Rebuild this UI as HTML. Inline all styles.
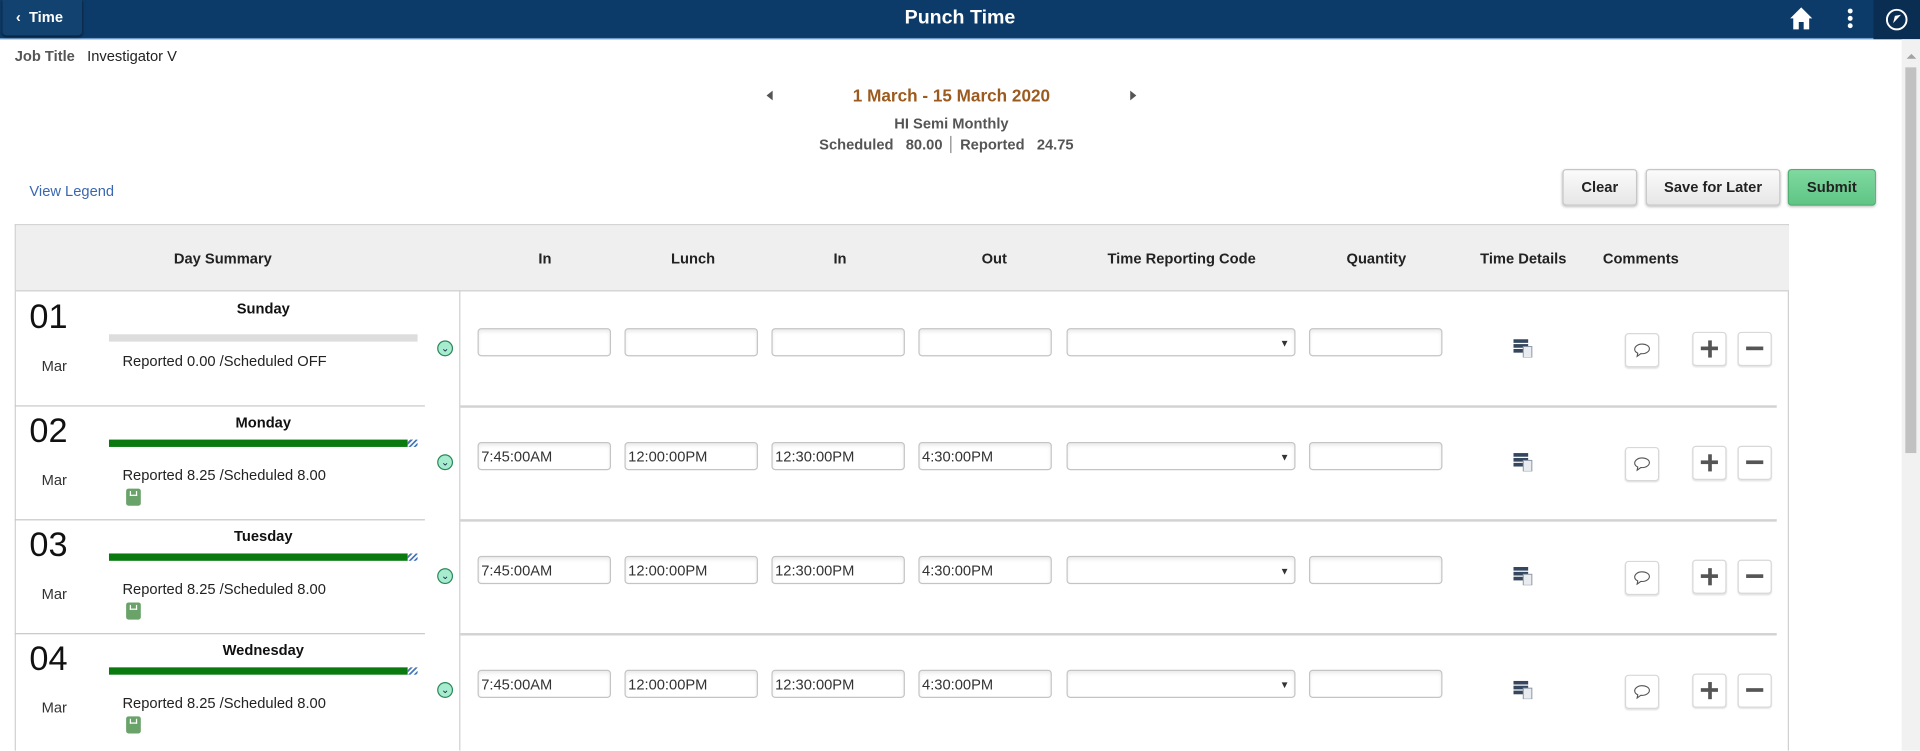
<!DOCTYPE html>
<html><head><meta charset="utf-8">
<style>
html,body{margin:0;padding:0;width:1920px;height:750px;overflow:hidden;background:#fff}
#s{position:absolute;left:0;top:0;width:1568px;height:613px;transform:scale(1.22449);transform-origin:0 0;font-family:"Liberation Sans",Arial,sans-serif;color:#333;font-size:12px}
.a{position:absolute}
.hdr{left:0;top:0;width:1568px;height:31px;background:#0d3b69;border-bottom:1px solid #6f98c2}
.inp{position:absolute;height:23px;border:1px solid #c4c4c4;border-radius:3px;background:#fff;box-shadow:inset 0 2px 3px rgba(0,0,0,.08);font-size:12px;line-height:23px;padding-left:2px;box-sizing:border-box}
.btn{position:absolute;border:1px solid #c6c6c6;border-radius:3px;background:linear-gradient(#fbfbfb,#e6e6e6);box-shadow:0 1px 2px rgba(0,0,0,.25);font-weight:bold;font-size:12px;text-align:center;color:#222}
.sq{position:absolute;width:26px;height:26px;border:1px solid #d8d8d8;border-radius:3px;background:#fff;box-shadow:0 1px 1px rgba(0,0,0,.1)}
.th{position:absolute;top:204px;font-weight:bold;font-size:12px;color:#222;transform:translateX(-50%);white-space:nowrap}
</style></head><body><div id="s">
<div class="a hdr"></div>
<div class="a" style="left:2px;top:0;width:65px;height:29px;background:#12426f;border-radius:0 0 3px 3px;box-shadow:0 1px 2px rgba(0,0,0,.5)"></div>
<div class="a" style="left:13px;top:7px;color:#fff;font-weight:bold;font-size:12px">&#8249;&nbsp; Time</div>
<div class="a" style="left:0;width:1568px;top:6px;text-align:center;color:#fff;font-weight:bold;font-size:16px">Punch Time</div>
<svg class="a" style="left:1461px;top:5px" width="20" height="20" viewBox="0 0 20 20"><path d="M10 1 L19 10 L16.5 10 L16.5 19 L12 19 L12 13 L8 13 L8 19 L3.5 19 L3.5 10 L1 10 Z" fill="#fff"/></svg>
<div class="a" style="left:1509px;top:7px;width:4px;height:4px;border-radius:2px;background:#fff;box-shadow:0 6px 0 #fff,0 12px 0 #fff"></div>
<div class="a" style="left:1530px;top:0;width:38px;height:32px;background:#0a2d52"></div>
<svg class="a" style="left:1539px;top:6px" width="20" height="20" viewBox="0 0 20 20"><circle cx="10" cy="10" r="8" fill="none" stroke="#fff" stroke-width="1.6"/><path d="M7 13 L8.5 7 L13.5 6 Z" fill="#fff"/></svg>
<div class="a" style="left:1553px;top:32px;width:15px;height:581px;background:#f1f1f1"></div>
<div class="a" style="left:1556px;top:55px;width:9px;height:315px;background:#c1c1c1"></div>
<div class="a" style="left:1557px;top:44px;width:0;height:0;border:4px solid transparent;border-bottom-color:#a3a3a3;border-top:0"></div>

<div class="a" style="left:12px;top:39px"><span style="color:#555;font-weight:bold">Job Title</span>&nbsp;&nbsp; <span style="color:#222">Investigator V</span></div>
<div class="a" style="left:626px;top:74px;border:4px solid transparent;border-right:5px solid #555;border-left:0"></div>
<div class="a" style="left:923px;top:74px;border:4px solid transparent;border-left:5px solid #555;border-right:0"></div>
<div class="a" style="left:577px;width:400px;top:70px;text-align:center;color:#9b5b1f;font-weight:bold;font-size:14px">1 March - 15 March 2020</div>
<div class="a" style="left:577px;width:400px;top:94px;text-align:center;color:#555;font-weight:bold">HI Semi Monthly</div>
<div class="a" style="left:669px;top:111px;color:#555;font-weight:bold">Scheduled&nbsp;&nbsp; 80.00&nbsp;&nbsp;<span style="display:inline-block;width:1px;height:14px;background:#888;vertical-align:-3px"></span>&nbsp;&nbsp;Reported&nbsp;&nbsp; 24.75</div>
<div class="a" style="left:24px;top:149px;color:#3a67b0">View Legend</div>
<div class="btn" style="left:1276px;top:138px;width:59px;height:28px;line-height:28px">Clear</div>
<div class="btn" style="left:1344px;top:138px;width:108px;height:28px;line-height:28px">Save for Later</div>
<div class="btn" style="left:1460px;top:138px;width:70px;height:28px;line-height:28px;background:linear-gradient(#7fd9a0,#5fc585);border-color:#4daf70">Submit</div>

<div class="a" style="left:12px;top:183px;width:1449px;height:430px;border:1px solid #d0d0d0;border-bottom:0;box-sizing:border-box"></div>
<div class="a" style="left:13px;top:184px;width:1448px;height:53px;background:#efefef;border-bottom:1px solid #cfcfcf"></div>
<div class="a" style="left:375px;top:237px;width:1px;height:376px;background:#d0d0d0"></div>
<div class="th" style="left:182px">Day Summary</div>
<div class="th" style="left:445px">In</div>
<div class="th" style="left:566px">Lunch</div>
<div class="th" style="left:686px">In</div>
<div class="th" style="left:812px">Out</div>
<div class="th" style="left:965px">Time Reporting Code</div>
<div class="th" style="left:1124px">Quantity</div>
<div class="th" style="left:1244px">Time Details</div>
<div class="th" style="left:1340px">Comments</div>

<div id="rows"></div>
<script>
var d=[["01","Sunday","Reported 0.00 /Scheduled OFF",0],["02","Monday","Reported 8.25 /Scheduled 8.00",1],["03","Tuesday","Reported 8.25 /Scheduled 8.00",1],["04","Wednesday","Reported 8.25 /Scheduled 8.00",1]];
var h="";
d.forEach(function(r,i){var t=237+i*93;
h+='<div class="a" style="left:24px;top:'+(t+6)+'px;font-size:28px;color:#111">'+r[0]+'</div>';
h+='<div class="a" style="left:34px;top:'+(t+55)+'px;color:#333">Mar</div>';
h+='<div class="a" style="left:89px;width:252px;top:'+(t+8)+'px;text-align:center;font-weight:bold;color:#111">'+r[1]+'</div>';
if(r[3]){h+='<div class="a" style="left:89px;top:'+(t+29)+'px;width:244px;height:6px;background:#0a7a10"></div><div class="a" style="left:333px;top:'+(t+29)+'px;width:8px;height:6px;background:repeating-linear-gradient(135deg,#fff 0 1.5px,#4a7ab8 1.5px 3px)"></div>';
h+='<div class="a" style="left:103px;top:'+(t+69)+'px;width:12px;height:14px;background:#6aa36a;border-radius:2px"><div style="margin:2px 3px;height:3px;border:1px solid #fff;border-top:0"></div></div>';}
else h+='<div class="a" style="left:89px;top:'+(t+36)+'px;width:252px;height:6px;background:#ddd"></div>';
h+='<div class="a" style="left:100px;top:'+(t+51)+'px;color:#222">'+r[2]+'</div>';
h+='<div class="a" style="left:357px;top:'+(t+41)+'px;width:11px;height:11px;border:1px solid #2a8a5a;border-radius:50%;background:#a8ecd0;font-size:8px;line-height:11px;text-align:center;color:#124">&#8964;</div>';
if(i<3){h+='<div class="a" style="left:12px;top:'+(t+94)+'px;width:335px;height:1px;background:#c8c8c8"></div><div class="a" style="left:376px;top:'+(t+94)+'px;width:1075px;height:2px;background:#d2d2d2"></div>';}
var v=r[3]?["7:45:00AM","12:00:00PM","12:30:00PM","4:30:00PM"]:["","","",""];
[390,510,630,750].forEach(function(x,k){h+='<div class="inp" style="left:'+x+'px;top:'+(t+31)+'px;width:109px">'+v[k]+'</div>'});
h+='<div class="inp" style="left:871px;top:'+(t+31)+'px;width:187px"><span style="position:absolute;right:4px;top:0;font-size:8px">&#9660;</span></div>';
h+='<div class="inp" style="left:1069px;top:'+(t+31)+'px;width:109px"></div>';
h+='<svg class="a" style="left:1236px;top:'+(t+40)+'px" width="16" height="15" viewBox="0 0 16 15"><rect x="0" y="0" width="12" height="3" fill="#34475e"/><rect x="0" y="4" width="12" height="3" fill="#34475e"/><rect x="0" y="8" width="8" height="3" fill="#34475e"/><rect x="8" y="6" width="7" height="9" fill="#e8ecf0" stroke="#8a96a4" stroke-width=".8"/></svg>';
h+='<div class="sq" style="left:1327px;top:'+(t+35)+'px"><svg style="position:absolute;left:6px;top:7px" width="14" height="12" viewBox="0 0 14 12"><path d="M7 1C3.5 1 1 3 1 5.2c0 1.5 1 2.5 2.5 3.2L3 11l3-2.2c.3 0 .7.1 1 .1 3.5 0 6-2 6-4.1S10.5 1 7 1z" fill="none" stroke="#555" stroke-width=".9"/></svg></div>';
h+='<div class="sq" style="left:1382px;top:'+(t+34)+'px"><div style="position:absolute;left:6px;top:11px;width:14px;height:3px;background:#555"></div><div style="position:absolute;left:11.5px;top:5.5px;width:3px;height:14px;background:#555"></div></div>';
h+='<div class="sq" style="left:1419px;top:'+(t+34)+'px"><div style="position:absolute;left:6px;top:11px;width:14px;height:3px;background:#555"></div></div>';
});
document.getElementById('rows').innerHTML=h;
</script>
</div></body></html>
